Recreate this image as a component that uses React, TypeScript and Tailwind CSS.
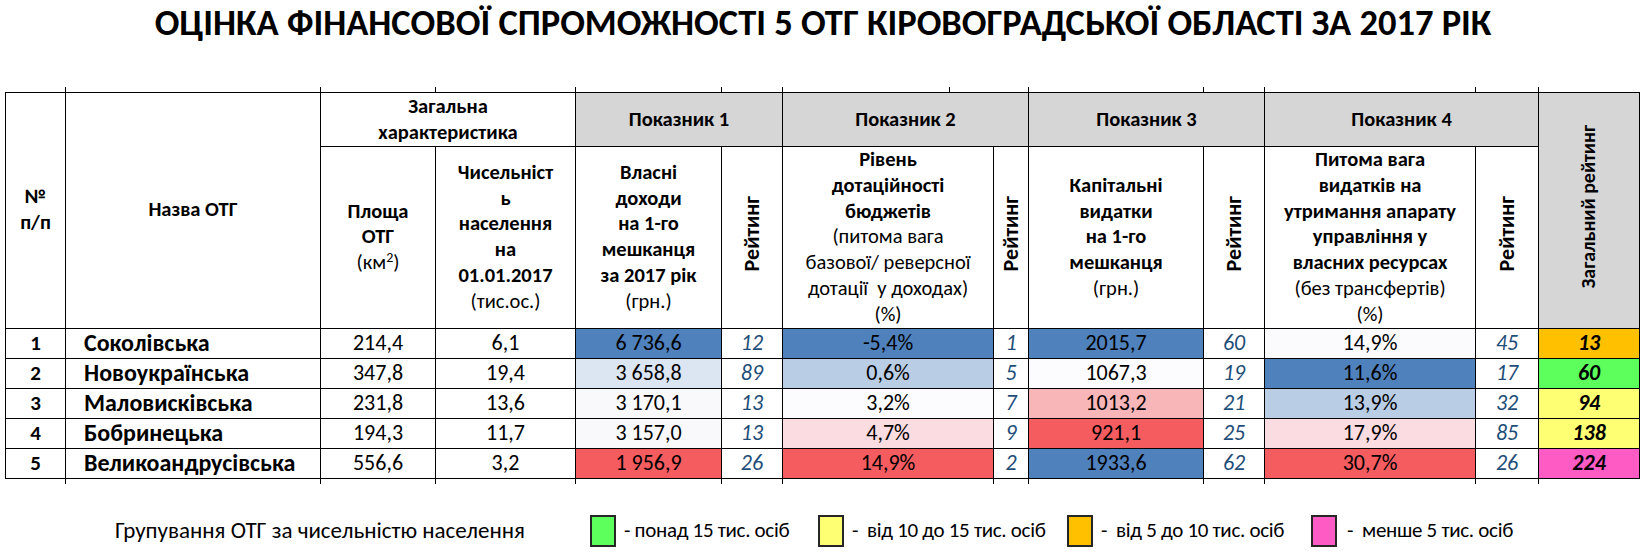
const font = "font-['Carlito','Calibri','Lato','Open_Sans',sans-serif]";

type Row = {
  n: number;
  name: string;
  area: string;
  pop: string;
  p1: string;
  p1bg: string;
  r1: string;
  p2: string;
  p2bg: string;
  r2: string;
  p3: string;
  p3bg: string;
  r3: string;
  p4: string;
  p4bg: string;
  r4: string;
  total: string;
  tbg: string;
};

const rows: Row[] = [
  { n: 1, name: 'Соколівська', area: '214,4', pop: '6,1', p1: '6 736,6', p1bg: 'bg-[#4f81bd]', r1: '12', p2: '-5,4%', p2bg: 'bg-[#4f81bd]', r2: '1', p3: '2015,7', p3bg: 'bg-[#4f81bd]', r3: '60', p4: '14,9%', p4bg: 'bg-[#fbfbfe]', r4: '45', total: '13', tbg: 'bg-[#ffc000]' },
  { n: 2, name: 'Новоукраїнська', area: '347,8', pop: '19,4', p1: '3 658,8', p1bg: 'bg-[#dce6f2]', r1: '89', p2: '0,6%', p2bg: 'bg-[#b9cde5]', r2: '5', p3: '1067,3', p3bg: 'bg-[#fcfcff]', r3: '19', p4: '11,6%', p4bg: 'bg-[#4f81bd]', r4: '17', total: '60', tbg: 'bg-[#5cff5c]' },
  { n: 3, name: 'Маловисківська', area: '231,8', pop: '13,6', p1: '3 170,1', p1bg: 'bg-[#f9f9fc]', r1: '13', p2: '3,2%', p2bg: 'bg-[#fcfcff]', r2: '7', p3: '1013,2', p3bg: 'bg-[#f8b6b9]', r3: '21', p4: '13,9%', p4bg: 'bg-[#b9cde5]', r4: '32', total: '94', tbg: 'bg-[#ffff73]' },
  { n: 4, name: 'Бобринецька', area: '194,3', pop: '11,7', p1: '3 157,0', p1bg: 'bg-[#f9f9fc]', r1: '13', p2: '4,7%', p2bg: 'bg-[#fbdce0]', r2: '9', p3: '921,1', p3bg: 'bg-[#f55c5f]', r3: '25', p4: '17,9%', p4bg: 'bg-[#fbdce0]', r4: '85', total: '138', tbg: 'bg-[#ffff73]' },
  { n: 5, name: 'Великоандрусівська', area: '556,6', pop: '3,2', p1: '1 956,9', p1bg: 'bg-[#f55c5f]', r1: '26', p2: '14,9%', p2bg: 'bg-[#f55c5f]', r2: '2', p3: '1933,6', p3bg: 'bg-[#4f81bd]', r3: '62', p4: '30,7%', p4bg: 'bg-[#f55c5f]', r4: '26', total: '224', tbg: 'bg-[#ff5bc4]' },
];

function Vertical({ text, bold }: { text: string; bold?: boolean }) {
  return (
    <span
      className={`inline-block rotate-180 [writing-mode:vertical-rl] ${
        bold ? 'text-[20px] font-bold' : 'text-[22px] font-semibold'
      }`}
    >
      {text}
    </span>
  );
}

function Rating({ value }: { value: string }) {
  return <td className="border border-black text-center italic text-[#1f4e79]">{value}</td>;
}

function Ticks({ bottom }: { bottom?: boolean }) {
  return (
    <div className="ml-[5px] flex h-[5px]">
      <div className="w-[60px]" />
      <div className="w-[255px] border-l border-black" />
      <div className="w-[115px] border-l border-black" />
      <div className="w-[140px] border-l border-black" />
      <div className="w-[146px] border-l border-black" />
      <div className="w-[61px] border-l border-black" />
      {bottom ? (
        <>
          <div className="w-[211px] border-l border-black" />
          <div className="w-[35px] border-l border-black" />
        </>
      ) : (
        <>
          <div className="w-[167px] border-l border-black" />
          <div className="w-[79px] border-l border-black" />
        </>
      )}
      <div className="w-[175px] border-l border-black" />
      <div className="w-[61px] border-l border-black" />
      <div className="w-[211px] border-l border-black" />
      <div className="w-[63px] border-l border-black" />
      <div className="w-[101px] border-l border-black" />
    </div>
  );
}

function LegendBox({ color }: { color: string }) {
  return <span className={`inline-block h-[32px] w-[26px] shrink-0 border-2 border-[#262626] ${color}`} />;
}

export default function App() {
  return (
    <div className={`h-[555px] w-[1646px] overflow-hidden bg-white text-black ${font}`}>
      <h1 className="h-[87px] pt-[5px] text-center text-[36.5px] leading-[36px] font-bold">
        ОЦІНКА ФІНАНСОВОЇ СПРОМОЖНОСТІ 5 ОТГ КІРОВОГРАДСЬКОЇ ОБЛАСТІ ЗА 2017 РІК
      </h1>

      <Ticks />

      <table className="ml-[5px] w-[1634px] table-fixed border-collapse">
        <colgroup>
          <col className="w-[60px]" />
          <col className="w-[255px]" />
          <col className="w-[115px]" />
          <col className="w-[140px]" />
          <col className="w-[146px]" />
          <col className="w-[61px]" />
          <col className="w-[211px]" />
          <col className="w-[35px]" />
          <col className="w-[175px]" />
          <col className="w-[61px]" />
          <col className="w-[211px]" />
          <col className="w-[63px]" />
          <col className="w-[101px]" />
        </colgroup>
        <thead className="text-[20.5px] leading-[25.8px]">
          <tr className="h-[54px]">
            <th rowSpan={2} className="border border-black font-bold">
              №
              <br />
              п/п
            </th>
            <th rowSpan={2} className="border border-black font-bold">Назва ОТГ</th>
            <th colSpan={2} className="border border-black font-bold">
              Загальна
              <br />
              характеристика
            </th>
            <th colSpan={2} className="border border-black bg-[#d6d6d6] font-bold">Показник 1</th>
            <th colSpan={2} className="border border-black bg-[#d6d6d6] font-bold">Показник 2</th>
            <th colSpan={2} className="border border-black bg-[#d6d6d6] font-bold">Показник 3</th>
            <th colSpan={2} className="border border-black bg-[#d6d6d6] font-bold">Показник 4</th>
            <th rowSpan={2} className="border border-black bg-[#d6d6d6]">
              <Vertical text="Загальний рейтинг" bold />
            </th>
          </tr>
          <tr className="h-[181px]">
            <th className="border border-black font-normal">
              <b>Площа</b>
              <br />
              <b>ОТГ</b>
              <br />
              (км<sup className="text-[14px]">2</sup>)
            </th>
            <th className="border border-black font-normal">
              <b>Чисельніст</b>
              <br />
              <b>ь</b>
              <br />
              <b>населення</b>
              <br />
              <b>на</b>
              <br />
              <b>01.01.2017</b>
              <br />
              (тис.ос.)
            </th>
            <th className="border border-black font-normal">
              <b>Власні</b>
              <br />
              <b>доходи</b>
              <br />
              <b>на 1-го</b>
              <br />
              <b>мешканця</b>
              <br />
              <b>за 2017 рік</b>
              <br />
              (грн.)
            </th>
            <th className="border border-black">
              <Vertical text="Рейтинг" />
            </th>
            <th className="border border-black font-normal">
              <b>Рівень</b>
              <br />
              <b>дотаційності</b>
              <br />
              <b>бюджетів</b>
              <br />
              (питома вага
              <br />
              базової/ реверсної
              <br />
              дотації&nbsp; у доходах)
              <br />
              (%)
            </th>
            <th className="border border-black">
              <Vertical text="Рейтинг" />
            </th>
            <th className="border border-black font-normal">
              <b>Капітальні</b>
              <br />
              <b>видатки</b>
              <br />
              <b>на 1-го</b>
              <br />
              <b>мешканця</b>
              <br />
              (грн.)
            </th>
            <th className="border border-black">
              <Vertical text="Рейтинг" />
            </th>
            <th className="border border-black font-normal">
              <b>Питома вага</b>
              <br />
              <b>видатків на</b>
              <br />
              <b>утримання апарату</b>
              <br />
              <b>управління у</b>
              <br />
              <b>власних ресурсах</b>
              <br />
              (без трансфертів)
              <br />
              (%)
            </th>
            <th className="border border-black">
              <Vertical text="Рейтинг" />
            </th>
          </tr>
        </thead>
        <tbody className="text-[22px] leading-none">
          {rows.map((r) => (
            <tr key={r.n} className="h-[30px]">
              <td className="border border-black text-center text-[21px] font-bold">{r.n}</td>
              <td className="border border-black pl-[18px] text-[24px] font-bold">{r.name}</td>
              <td className="border border-black text-center">{r.area}</td>
              <td className="border border-black text-center">{r.pop}</td>
              <td className={`border border-black text-center ${r.p1bg}`}>{r.p1}</td>
              <Rating value={r.r1} />
              <td className={`border border-black text-center ${r.p2bg}`}>{r.p2}</td>
              <Rating value={r.r2} />
              <td className={`border border-black text-center ${r.p3bg}`}>{r.p3}</td>
              <Rating value={r.r3} />
              <td className={`border border-black text-center ${r.p4bg}`}>{r.p4}</td>
              <Rating value={r.r4} />
              <td className={`border border-black text-center font-bold italic ${r.tbg}`}>{r.total}</td>
            </tr>
          ))}
        </tbody>
      </table>

      <Ticks bottom />

      <div className="mt-[31px] flex items-center pl-[115px] text-[21px] leading-none tracking-[-0.3px]">
        <span className="w-[475px] shrink-0 text-[23px] tracking-normal">Групування ОТГ за чисельністю населення</span>
        <LegendBox color="bg-[#5cff5c]" />
        <span className="ml-[8px] w-[194px] shrink-0">- понад 15 тис. осіб</span>
        <LegendBox color="bg-[#ffff73]" />
        <span className="ml-[8px] w-[215px] shrink-0 whitespace-pre">-  від 10 до 15 тис. осіб</span>
        <LegendBox color="bg-[#ffc000]" />
        <span className="ml-[8px] w-[210px] shrink-0 whitespace-pre">-  від 5 до 10 тис. осіб</span>
        <LegendBox color="bg-[#ff5bc4]" />
        <span className="ml-[10px] whitespace-pre">-  менше 5 тис. осіб</span>
      </div>
    </div>
  );
}
